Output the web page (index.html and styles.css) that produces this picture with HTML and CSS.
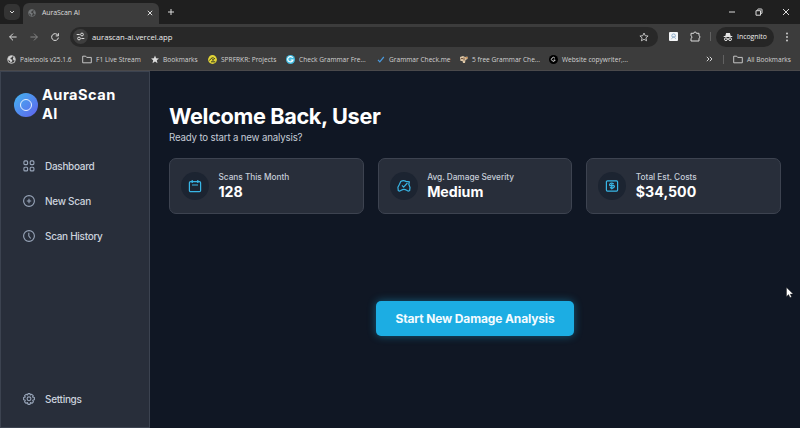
FILE: index.html
```html
<!DOCTYPE html>
<html lang="en">
<head>
<meta charset="utf-8">
<title>AuraScan AI</title>
<link rel="stylesheet" href="styles.css">
</head>
<body>
<svg width="0" height="0" class="defs">
  <symbol id="globe" viewBox="0 0 10 10"><circle cx="5" cy="5" r="4.3" fill="none" stroke="currentColor" stroke-width="1"/><path fill="currentColor" d="M1 3.2 3.3 1 6 .8 5.6 2.6 3.8 3.4 4.2 4.8 6 5.3 5.6 7 4.3 9 3.3 6.6 1 5zM6.8 2.6 8.6 2.7 9 5.8 7.6 6.2 6.6 4.4z"/></symbol>
  <symbol id="folder" viewBox="0 0 10 9"><path fill="none" stroke="currentColor" stroke-width=".9" stroke-linejoin="round" d="M.7 1.2h3l1 1.2h4.6v5.4H.7z"/></symbol>
</svg>
<header class="browser">
  <div class="tabstrip">
    <div class="tabsearch"><svg width="6" height="6" viewBox="0 0 6 6"><path d="M1 2l2 2 2-2" class="line"/></svg></div>
    <div class="tab">
      <svg class="fav" width="8" height="8"><use href="#globe"/></svg>
      <span>AuraScan AI</span>
      <svg class="close" width="6" height="6" viewBox="0 0 6 6"><path d="M.8.8l4.4 4.4M5.2.8.8 5.2" class="line"/></svg>
    </div>
    <svg class="plus" width="8" height="8" viewBox="0 0 8 8"><path d="M4 1v6M1 4h6" class="line"/></svg>
    <div class="winctl">
      <svg width="8" height="8" viewBox="0 0 8 8"><path d="M1 4h6" class="line"/></svg>
      <svg width="8" height="8" viewBox="0 0 8 8"><path d="M1 2.7h4.5v4.5H1zM2.7 2.4V1.5Q2.7 1 3.2 1H6.4Q7 1 7 1.6V5Q7 5.5 6.5 5.5H5.8" class="line"/></svg>
      <svg width="8" height="8" viewBox="0 0 8 8"><path d="M1 1l6 6M7 1 1 7" class="line"/></svg>
    </div>
  </div>
  <div class="toolbar">
    <svg class="nav" width="10" height="10" viewBox="0 0 10 10"><path d="M8.6 5H1.6M5 1.6 1.6 5 5 8.4" class="line"/></svg>
    <svg class="nav dim" width="10" height="10" viewBox="0 0 10 10"><path d="M1.4 5h7M5 1.6 8.4 5 5 8.4" class="line"/></svg>
    <svg class="nav" width="10" height="10" viewBox="0 0 10 10"><path d="M8.1 3.6A3.4 3.4 0 1 0 8.4 5.6M8.4 1.2v2.7H5.7" class="line"/></svg>
    <div class="omnibox">
      <div class="tune"><svg width="9" height="9" viewBox="0 0 9 9"><path d="M.7 2.5h3M5.3 6.5h3" class="line"/><circle cx="6" cy="2.5" r="1.4" class="line"/><circle cx="3" cy="6.5" r="1.4" class="line"/></svg></div>
      <span class="url">aurascan-ai.vercel.app</span>
      <svg width="10" height="10" viewBox="0 0 10 10"><path d="M5 1l1.2 2.7 2.9.3-2.2 1.9.7 2.9L5 7.3 2.4 8.8l.7-2.9L.9 4l2.9-.3z" class="line thin"/></svg>
    </div>
    <svg class="ext" width="9" height="9" viewBox="0 0 9 9"><rect width="9" height="9" rx="1" fill="#f4f6f8"/><circle cx="4.6" cy="3.7" r="1.8" fill="none" stroke="#7aa0c4" stroke-width=".8"/><path d="M2.3 7.3 4.6 4l2.2 3" fill="none" stroke="#93abc2" stroke-width=".7"/></svg>
    <svg class="puzzle" width="11" height="11" viewBox="0 0 11 11"><path d="M1 2.3h2.8a1.3 1.3 0 0 1 2.6 0H9v2.4a1.3 1.3 0 0 1 0 2.5V10H1V7.4a1.3 1.3 0 0 0 0-2.5z" class="line"/></svg>
    <i class="sep"></i>
    <div class="chip">
      <svg width="10" height="10" viewBox="0 0 10 10"><path fill="#e3e3e3" d="M3.1 1h3.8l.8 3h1.6v1H.7V4h1.6z"/><circle cx="2.9" cy="7.2" r="1.4" class="line"/><circle cx="7.1" cy="7.2" r="1.4" class="line"/><path d="M4.2 7h1.6" class="line"/></svg>
      <span>Incognito</span>
    </div>
    <svg class="dots" width="4" height="10" viewBox="0 0 4 10"><g fill="#d8d8d8"><circle cx="2" cy="1.5" r=".9"/><circle cx="2" cy="5" r=".9"/><circle cx="2" cy="8.5" r=".9"/></g></svg>
  </div>
  <nav class="bookmarks">
    <a class="bm b1"><svg width="9" height="9"><use href="#globe"/></svg><span>Paletools v25.1.6</span></a>
    <a class="bm b2"><svg width="10" height="9"><use href="#folder"/></svg><span>F1 Live Stream</span></a>
    <a class="bm b3"><svg width="8" height="9" viewBox="0 0 8 8"><path fill="#dcdcdc" d="M4 0l1.1 2.7 2.9.2-2.2 1.9.7 2.9L4 6.1 1.5 7.7l.7-2.9L0 2.9l2.9-.2z"/></svg><span>Bookmarks</span></a>
    <a class="bm b4"><svg width="9" height="9" viewBox="0 0 9 9"><circle cx="4.5" cy="4.5" r="4.4" fill="#e2d536"/><path d="M1.5 5.5Q4 1 7 4M3 6.8h4.2" stroke="#3a3c22" fill="none"/><circle cx="5" cy="4.8" r=".9" fill="#3a3c22"/></svg><span>SPRFRKR: Projects</span></a>
    <a class="bm b5"><svg width="9" height="9" viewBox="0 0 9 9"><circle cx="4.5" cy="4.5" r="4.5" fill="#44bde2"/><path d="M6.7 2.8A2.7 2.7 0 1 0 7 5H4.7" stroke="#fff" stroke-width="1.2" fill="none"/></svg><span>Check Grammar Fre...</span></a>
    <a class="bm b6"><svg width="8" height="9" viewBox="0 0 8 9"><path d="M1 4.8l1.8 2L6.8 2" stroke="#4a9be0" stroke-width="1.2" fill="none"/></svg><span>Grammar Check.me</span></a>
    <a class="bm b7"><svg width="8" height="9" viewBox="0 0 8 9"><path d="M0 2 3 1 5 2 7.5 1.5V4L5.5 5 5 8H3L2.5 6 .5 6z" fill="#dcc6a6"/><path d="M1 3.6h2M4 2.5v3" stroke="#6d4c35"/><path d="M5.5 2h2v1.5h-2z" fill="#c98d51"/></svg><span>5 free Grammar Che...</span></a>
    <a class="bm b8"><svg width="9" height="9" viewBox="0 0 9 9"><circle cx="4.5" cy="4.5" r="4.5" fill="#000"/><path d="M6 3.3A1.9 1.9 0 1 0 6.2 5H4.7" stroke="#fff" stroke-width=".8" fill="none"/></svg><span>Website copywriter,...</span></a>
    <svg class="more" width="7" height="6" viewBox="0 0 7 6"><path d="M.8.8 3 3 .8 5.2M3.8.8 6 3 3.8 5.2" class="line"/></svg>
    <i class="sep"></i>
    <a class="bm all"><svg width="10" height="9"><use href="#folder"/></svg><span>All Bookmarks</span></a>
  </nav>
</header>
<div class="app">
  <aside class="sidebar">
    <div class="brand">
      <div class="logo"></div>
      <div class="name">AuraScan AI</div>
    </div>
    <nav class="menu">
      <a><svg width="12" height="12" viewBox="0 0 12 12"><rect x=".9" y=".9" width="3.7" height="3.7" rx="1"/><rect x="7.2" y=".9" width="3.7" height="3.7" rx="1"/><rect x=".9" y="7.2" width="3.7" height="3.7" rx="1"/><rect x="7.2" y="7.2" width="3.7" height="3.7" rx="1"/></svg>Dashboard</a>
      <a><svg width="12" height="12" viewBox="0 0 12 12"><circle cx="6" cy="6" r="5.4"/><path d="M6 3.8v4.4M3.8 6h4.4"/></svg>New Scan</a>
      <a><svg width="12" height="12" viewBox="0 0 12 12"><circle cx="6" cy="6" r="5.4"/><path d="M5.8 2.8V6l1.9 2.5"/></svg>Scan History</a>
      <a class="settings"><svg width="12" height="12" viewBox="0 0 12 12"><path d="M5 .6h2l.4 1.4 1.3-.7 1.5 1.4-.7 1.3 1.9.6v2.2l-1.7.5.7 1.5L9 10.3l-1.5-.7L7 11.4H5l-.5-1.8-1.5.7-1.4-1.5.7-1.5L.6 6.8V4.6L2.3 4l-.7-1.3L3.1 1.3l1.4.7z"/><circle cx="6" cy="5.8" r="1.9"/></svg>Settings</a>
    </nav>
  </aside>
  <main class="main">
    <h1>Welcome Back, User</h1>
    <p class="sub">Ready to start a new analysis?</p>
    <section class="cards">
      <article class="card">
        <div class="badge"><svg width="14" height="14" viewBox="0 0 14 14"><rect x="1.4" y="2.6" width="11.2" height="10" rx="1.2"/><path d="M4.2 1v3M9.8 1v3M4 6h6"/></svg></div>
        <div class="stat"><div class="label">Scans This Month</div><div class="value">128</div></div>
      </article>
      <article class="card">
        <div class="badge"><svg width="14" height="14" viewBox="0 0 14 14"><path d="M3.7 2.6Q6.2.9 9 2.4L12.4 2.8 11.8 5.3 13 8.5 12.6 11.6Q11 12.8 9.6 11.2Q7 9.4 4.3 11.2Q2.8 12.7 1.3 11.6L.9 8.2 2.5 5.2zM5 6.3l1.6 1.8L10.4 4"/></svg></div>
        <div class="stat"><div class="label">Avg. Damage Severity</div><div class="value">Medium</div></div>
      </article>
      <article class="card">
        <div class="badge"><svg width="14" height="14" viewBox="0 0 14 14"><rect x="1.4" y="1.9" width="11.2" height="10.2" rx="1"/><path d="M8.8 4.9Q6.3 3.3 4.8 5.1Q4 6.7 6 6.7H8.8Q10 7 9 8.2L6.8 9.8V5M5 8.2l2 1.6"/></svg></div>
        <div class="stat"><div class="label">Total Est. Costs</div><div class="value">$34,500</div></div>
      </article>
    </section>
    <button class="cta">Start New Damage Analysis</button>
  </main>
</div>
<svg class="cursor" width="8" height="12" viewBox="0 0 8 12"><path d="M.5.5v9l2.1-1.9 1.4 3 1.5-.7-1.3-2.8h2.9z" fill="#fff" stroke="#222" stroke-width=".4"/></svg>
</body>
</html>
```

FILE: styles.css
```css
* { box-sizing: border-box; }
body { margin: 0; width: 800px; height: 428px; overflow: hidden; background: #101724; font-family: Inter, sans-serif; display: flex; flex-direction: column; }
svg { flex: none; display: block; }
.defs { position: absolute; }
.line { fill: none; stroke: currentColor; stroke-width: 1; }
.thin { stroke-width: .8; }

/* Browser frame */
.browser { height: 71px; flex: none; background: #3c3c3c; color: #dcdcdc; font: 7px "Open Sans", "Noto Sans", sans-serif; white-space: nowrap; border-bottom: 1px solid #4a494b; }
.tabstrip { height: 24px; background: #1f1f1f; display: flex; align-items: center; }
.tabsearch { width: 16px; height: 16px; margin-left: 4px; border-radius: 5px; background: #343434; display: flex; align-items: center; justify-content: center; }
.tab { width: 136px; height: 21px; align-self: flex-end; margin-left: 3px; background: #3c3c3c; border-radius: 6px 6px 0 0; display: flex; align-items: center; padding: 0 6px 2px 5px; }
.tab span { letter-spacing: -.1px; }
.fav { color: #747779; margin-right: 6px; }
.close { margin-left: auto; }
.plus { margin-left: 8px; }
.winctl { margin-left: auto; display: flex; gap: 19px; padding-right: 10px; }
.toolbar { height: 25px; display: flex; align-items: center; }
.nav { margin-left: 8px; }
.nav + .nav { margin-left: 11px; }
.dim { color: #858585; }
.omnibox { width: 588px; height: 20px; margin-left: 10px; border-radius: 10px; background: #282828; display: flex; align-items: center; padding: 0 9px 0 3px; }
.tune { width: 15px; height: 15px; border-radius: 50%; background: #3e3e3e; display: flex; align-items: center; justify-content: center; }
.url { margin-left: 4px; margin-right: auto; font-size: 7.7px; color: #eee; }
.ext { margin-left: 11px; }
.puzzle { margin-left: 12px; }
.sep { width: 1px; height: 9px; background: #626262; }
.toolbar .sep { margin-left: 9px; }
.chip { width: 58px; height: 20px; margin-left: 5px; border-radius: 10px; background: #262626; display: flex; align-items: center; gap: 4px; padding-left: 7px; color: #eee; font-size: 6.9px; }
.dots { margin-left: 11px; }
.bookmarks { height: 20px; display: flex; align-items: center; padding-left: 7px; color: #d2d2d2; font-size: 6.6px; }
.bm { display: flex; align-items: center; gap: 4px; }
.b1 { width: 75px; }
.b2 { width: 69px; }
.b3 { width: 57px; }
.b4 { width: 78px; }
.b5 { width: 91px; }
.b6 { width: 83px; }
.b7 { width: 89px; }
.b8 { width: 157px; }
.bookmarks .sep { margin: 0 9px 0 10px; }

/* Dashboard */
.app { flex: 1; display: flex; min-height: 0; }
.sidebar { width: 150px; flex: none; background: #282e3a; border: 1px solid #3c4350; display: flex; flex-direction: column; }
.brand { display: flex; align-items: center; gap: 4px; padding: 14px 13px 0; }
.logo { width: 24px; height: 24px; flex: none; border-radius: 50%; background: linear-gradient(135deg, #43b5ef, #6061ee); display: flex; align-items: center; justify-content: center; }
.logo::before { content: ""; width: 10px; height: 10px; border: 1.3px solid #e6f0ff; border-radius: 50%; }
.name { font-size: 14.6px; line-height: 19px; font-weight: 700; letter-spacing: .46px; color: #fff; width: 80px; }
.menu { flex: 1; display: flex; flex-direction: column; padding: 24px 0 10px 22px; }
.menu a { height: 35.3px; display: flex; align-items: center; gap: 10px; font-size: 10px; font-weight: 500; letter-spacing: -.3px; color: #ccd3de; }
.menu svg { fill: none; stroke: #98a5b9; stroke-width: 1.1; stroke-linejoin: round; }
.menu .settings { margin-top: auto; }
.main { flex: 1; padding: 33px 19px 0; display: flex; flex-direction: column; background: #101724; }
h1 { margin: 0; font-size: 21.7px; line-height: 25px; font-weight: 700; letter-spacing: -.36px; color: #fff; }
.sub { margin: 0; padding-top: 1px; font-size: 9.7px; line-height: 16px; letter-spacing: -.17px; color: #c5ccd7; }
.cards { display: grid; grid-template-columns: repeat(3, 1fr); gap: 14px; margin-top: 12px; }
.card { height: 56px; border: 1px solid #3d4350; border-radius: 7px; background: #282e3a; display: flex; align-items: center; gap: 9.5px; padding-left: 11px; }
.badge { width: 28px; height: 28px; border-radius: 50%; background: #1c2431; display: flex; align-items: center; justify-content: center; }
.badge svg { fill: none; stroke: #38b6e6; stroke-width: 1.2; stroke-linejoin: round; }
.stat { padding-bottom: 2px; }
.label { font-size: 8.3px; line-height: 12px; font-weight: 500; letter-spacing: -.03px; color: #c5ccd7; }
.value { font-size: 14.2px; line-height: 17px; font-weight: 700; color: #fff; }
.cta { align-self: center; width: 198px; height: 35px; margin-top: 87px; border: 0; border-radius: 5px; background: #1cade3; box-shadow: 0 0 8px rgba(28, 173, 227, .45); color: #f3fbff; font: 700 12px Inter, sans-serif; letter-spacing: -.14px; padding: 0; }
.cursor { position: absolute; left: 786px; top: 287px; }
```
